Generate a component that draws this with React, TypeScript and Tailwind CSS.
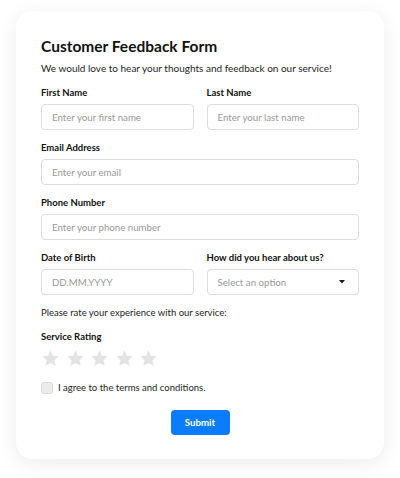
import React from 'react';

const FONT = "font-['Lato','Noto_Sans',sans-serif]";

function Field({ label, placeholder }: { label: string; placeholder: string }) {
  return (
    <div className="flex flex-col">
      <label className="text-[9.5px] leading-[14px] font-bold text-[#111]">{label}</label>
      <input
        placeholder={placeholder}
        className="mt-1 h-[26px] w-full rounded-[4px] border border-[#dcdcdc] px-[10px] text-[9.7px] text-[#222] outline-none placeholder:text-[#999]"
      />
    </div>
  );
}

function Star() {
  return (
    <svg width="19" height="19" viewBox="0 0 24 24" className="fill-[#e4e4e4]">
      <path d="M12 1.5l3.1 6.9 7.4.7-5.6 5 1.7 7.4L12 17.6l-6.6 3.9 1.7-7.4-5.6-5 7.4-.7z" />
    </svg>
  );
}

export default function App() {
  return (
    <div className={`${FONT} w-[400px] h-[478px] bg-white px-4 pt-[11px]`}>
      <form className="rounded-2xl bg-white px-[25px] pt-[25px] pb-[24px] shadow-[0_4px_20px_rgba(0,0,0,0.08)]">
        <h1 className="text-[15.5px] leading-[20px] font-bold text-[#111]">Customer Feedback Form</h1>
        <p className="mt-1 text-[10px] leading-[16px] text-[#1e1e1e]">
          We would love to hear your thoughts and feedback on our service!
        </p>

        <div className="mt-[10px] grid grid-cols-2 gap-[13px]">
          <Field label="First Name" placeholder="Enter your first name" />
          <Field label="Last Name" placeholder="Enter your last name" />
        </div>

        <div className="mt-[11px]">
          <Field label="Email Address" placeholder="Enter your email" />
        </div>

        <div className="mt-[11px]">
          <Field label="Phone Number" placeholder="Enter your phone number" />
        </div>

        <div className="mt-[11px] grid grid-cols-2 gap-[13px]">
          <Field label="Date of Birth" placeholder="DD.MM.YYYY" />
          <div className="flex flex-col">
            <label className="text-[9.5px] leading-[14px] font-bold text-[#111]">How did you hear about us?</label>
            <div className="mt-1 flex h-[26px] items-center justify-between rounded-[4px] border border-[#dcdcdc] px-[10px]">
              <span className="text-[9.7px] text-[#999]">Select an option</span>
              <svg width="6" height="3.5" viewBox="0 0 6 3.5" className="mr-[3px] fill-[#1a1a1a]">
                <path d="M0 0h6L3 3.5z" />
              </svg>
            </div>
          </div>
        </div>

        <p className="mt-[10px] text-[9.5px] leading-[16px] text-[#1e1e1e]">Please rate your experience with our service:</p>

        <div className="mt-[9px] text-[9.5px] leading-[14px] font-bold text-[#111]">Service Rating</div>
        <div className="mt-[5px] flex gap-[5.5px]">
          <Star />
          <Star />
          <Star />
          <Star />
          <Star />
        </div>

        <label className="mt-[12px] flex h-4 items-center gap-[5px]">
          <span className="h-[12px] w-[12px] rounded-[3px] border border-[#d8d8d8] bg-[#ececec]" />
          <span className="text-[9.5px] text-[#1e1e1e]">I agree to the terms and conditions.</span>
        </label>

        <div className="mt-[14px] flex justify-center">
          <button
            type="button"
            className="h-[25px] w-[59px] rounded-[4px] bg-[#0a7cff] text-[9.7px] font-bold text-white"
          >
            Submit
          </button>
        </div>
      </form>
    </div>
  );
}
